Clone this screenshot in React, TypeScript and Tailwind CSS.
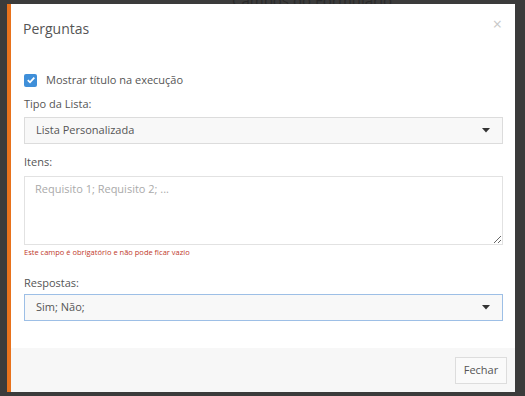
export default function App() {
  return (
    <main
      className="relative h-[396px] w-[525px] overflow-hidden bg-[#3b3b3b] pl-[7px] pr-[10px] pt-[4px] pb-[4px]"
      style={{ fontFamily: '"Open Sans", "Liberation Sans", sans-serif' }}
    >
      {/* page text behind the overlay */}
      <div className="absolute left-[232px] top-[-11px] text-[15px] text-[#2a2a2a]">
        Campos do Formulário
      </div>

      {/* Modal */}
      <div className="relative flex h-full flex-col border-l-4 border-[#e8721c] bg-white">
        {/* Header */}
        <div className="flex h-[48px] items-center justify-between pl-[12px] pr-[13px]">
          <h1 className="text-[14px] text-[#555555]">Perguntas</h1>
          <span className="mb-[8px] text-[16px] leading-none text-[#c8c8c8]">×</span>
        </div>

        {/* Body */}
        <div className="flex flex-col pl-[13px] pr-[12px] pt-[20px] text-[11px] text-[#555555]">
          <label className="flex h-4 items-center gap-[9px]">
            <span className="flex h-[13px] w-[13px] items-center justify-center rounded-[2px] bg-[#3f8fd9]">
              <svg width="10" height="10" viewBox="0 0 10 10" fill="none">
                <path d="M1.8 5.2 L4 7.3 L8.3 2.6" stroke="white" strokeWidth="1.8" />
              </svg>
            </span>
            <span>Mostrar título na execução</span>
          </label>

          <div className="mt-[8px] h-4 leading-4">Tipo da Lista:</div>
          <div className="mt-[5px] flex h-[27px] items-center justify-between border border-[#dcdcdc] bg-[#f8f8f8] pl-[11px] pr-[12px]">
            <span>Lista Personalizada</span>
            <Caret />
          </div>

          <div className="mt-[10px] h-4 leading-4">Itens:</div>
          <textarea
            className="mt-[6px] h-[69px] w-full border border-[#e2e2e2] px-[10px] py-[4px] text-[11px] text-[#555555] outline-none placeholder:text-[#aaaaaa]"
            placeholder="Requisito 1; Requisito 2; ..."
          />
          <div className="mt-[1px] h-3 text-[7.5px] leading-3 text-[#c0392b]">
            Este campo é obrigatório e não pode ficar vazio
          </div>

          <div className="mt-[17px] h-4 leading-4">Respostas:</div>
          <div className="mt-[3px] flex h-[27px] items-center justify-between border border-[#9dbfe6] bg-[#f8f8f8] pl-[11px] pr-[12px]">
            <span>Sim; Não;</span>
            <Caret />
          </div>
        </div>

        <div className="flex-1" />

        {/* Footer */}
        <div className="flex h-[44px] items-center justify-end bg-[#f7f7f7] pr-[8px]">
          <button className="h-[27px] w-[52px] border border-[#dddddd] bg-[#fafafa] text-[11px] text-[#555555]">
            Fechar
          </button>
        </div>
      </div>
    </main>
  );
}

function Caret() {
  return (
    <svg width="8" height="5" viewBox="0 0 8 5">
      <path d="M0 0 H8 L4 4.5 Z" fill="#333333" />
    </svg>
  );
}
